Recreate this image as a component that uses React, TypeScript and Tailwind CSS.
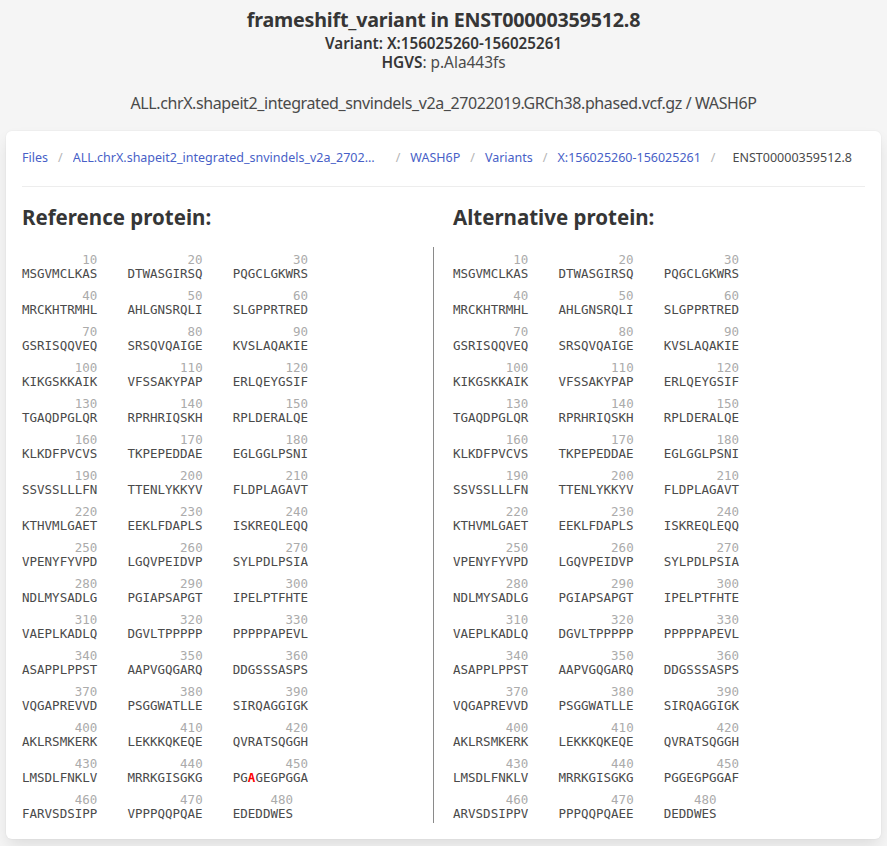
import React from "react";

const REF: string[][] = [
  ["MSGVMCLKAS", "DTWASGIRSQ", "PQGCLGKWRS"],
  ["MRCKHTRMHL", "AHLGNSRQLI", "SLGPPRTRED"],
  ["GSRISQQVEQ", "SRSQVQAIGE", "KVSLAQAKIE"],
  ["KIKGSKKAIK", "VFSSAKYPAP", "ERLQEYGSIF"],
  ["TGAQDPGLQR", "RPRHRIQSKH", "RPLDERALQE"],
  ["KLKDFPVCVS", "TKPEPEDDAE", "EGLGGLPSNI"],
  ["SSVSSLLLFN", "TTENLYKKYV", "FLDPLAGAVT"],
  ["KTHVMLGAET", "EEKLFDAPLS", "ISKREQLEQQ"],
  ["VPENYFYVPD", "LGQVPEIDVP", "SYLPDLPSIA"],
  ["NDLMYSADLG", "PGIAPSAPGT", "IPELPTFHTE"],
  ["VAEPLKADLQ", "DGVLTPPPPP", "PPPPPAPEVL"],
  ["ASAPPLPPST", "AAPVGQGARQ", "DDGSSSASPS"],
  ["VQGAPREVVD", "PSGGWATLLE", "SIRQAGGIGK"],
  ["AKLRSMKERK", "LEKKKQKEQE", "QVRATSQGGH"],
  ["LMSDLFNKLV", "MRRKGISGKG", "PGAGEGPGGA"],
  ["FARVSDSIPP", "VPPPQQPQAE", "EDEDDWES"],
];

const ALT: string[][] = [
  ...REF.slice(0, 14),
  ["LMSDLFNKLV", "MRRKGISGKG", "PGGEGPGGAF"],
  ["ARVSDSIPPV", "PPPQQPQAEE", "DEDDWES"],
];

function Block({
  seq,
  num,
  hl,
}: {
  seq: string;
  num: number;
  hl?: number;
}) {
  return (
    <div className="flex flex-col items-end">
      <div className="text-[#ababab] leading-[14px]">{num}</div>
      <div className="leading-[14px] text-[#4a4a4a]">
        {hl === undefined ? (
          seq
        ) : (
          <>
            {seq.slice(0, hl)}
            <span className="text-[#ff0000] font-bold">{seq[hl]}</span>
            {seq.slice(hl + 1)}
          </>
        )}
      </div>
    </div>
  );
}

function Sequence({ rows, highlight }: { rows: string[][]; highlight?: boolean }) {
  return (
    <div
      className="flex flex-col gap-[8px] text-[12.5px] whitespace-pre"
      style={{ fontFamily: '"DejaVu Sans Mono", monospace' }}
    >
      {rows.map((row, i) => (
        <div key={i} className="flex">
          {row.map((b, j) => (
            <div key={j} className="w-[105.4px] flex">
              <Block
                seq={b}
                num={i * 30 + (j + 1) * 10}
                hl={highlight && i === 14 && j === 2 ? 2 : undefined}
              />
            </div>
          ))}
        </div>
      ))}
    </div>
  );
}

function Sep({ last }: { last?: boolean }) {
  return (
    <span
      className={
        last
          ? "text-[#b5b5b5] pl-[10px] pr-[17px] shrink-0"
          : "text-[#b5b5b5] px-[10px] shrink-0"
      }
    >
      /
    </span>
  );
}

export default function App() {
  return (
    <div
      className="min-h-[846px] bg-[#f5f5f5] text-[#4a4a4a] pb-[10px]"
      style={{ fontFamily: '"Noto Sans", "Open Sans", sans-serif' }}
    >
      <div className="flex flex-col items-center pt-[7px] whitespace-nowrap">
        <h1 className="text-[19.7px] font-bold text-[#363636] leading-[26px] tracking-[-0.2px]">
          frameshift_variant in ENST00000359512.8
        </h1>
        <div className="text-[15.2px] font-semibold text-[#363636] leading-[20px]">
          Variant: X:156025260-156025261
        </div>
        <div className="text-[15.4px] text-[#4a4a4a] leading-[20px]">
          <span className="font-semibold text-[#363636]">HGVS</span>: p.Ala443fs
        </div>
        <div className="mt-[20px] text-[16px] text-[#4a4a4a] leading-[20px] tracking-[-0.4px]">
          ALL.chrX.shapeit2_integrated_snvindels_v2a_27022019.GRCh38.phased.vcf.gz / WASH6P
        </div>
      </div>

      <div className="mx-[6px] mt-[18px] bg-white rounded-[6px] shadow-[0_8px_16px_-2px_rgba(10,10,10,0.1),0_0_0_1px_rgba(10,10,10,0.02)] px-[16px] pt-[16px] pb-[16px]">
        <nav className="flex items-center text-[12.5px] leading-[20px] h-[22px] whitespace-nowrap">
          <a className="text-[#485fc7] shrink-0">Files</a>
          <Sep />
          <a className="text-[#485fc7] w-[313px] truncate shrink-0 pr-[6px]">
            ALL.chrX.shapeit2_integrated_snvindels_v2a_27022019.GRCh38.phased.vcf.gz
          </a>
          <Sep />
          <a className="text-[#485fc7] shrink-0">WASH6P</a>
          <Sep />
          <a className="text-[#485fc7] shrink-0">Variants</a>
          <Sep />
          <a className="text-[#485fc7] shrink-0">X:156025260-156025261</a>
          <Sep last />
          <span className="text-[#4a4a4a] shrink-0">ENST00000359512.8</span>
        </nav>
        <div className="mt-[17px] border-t border-[#ededed]" />

        <div className="grid grid-cols-[431px_1fr] mt-[15px]">
          <div>
            <h2 className="text-[20.5px] font-bold text-[#363636] leading-[30px]">
              Reference protein:
            </h2>
            <div className="mt-[15px] w-[412px] border-r border-[#8a8a8a] pt-[6px] pb-[2px]">
              <Sequence rows={REF} highlight />
            </div>
          </div>
          <div>
            <h2 className="text-[20.5px] font-bold text-[#363636] leading-[30px]">
              Alternative protein:
            </h2>
            <div className="mt-[15px] pt-[6px] pb-[2px]">
              <Sequence rows={ALT} />
            </div>
          </div>
        </div>
      </div>
    </div>
  );
}
